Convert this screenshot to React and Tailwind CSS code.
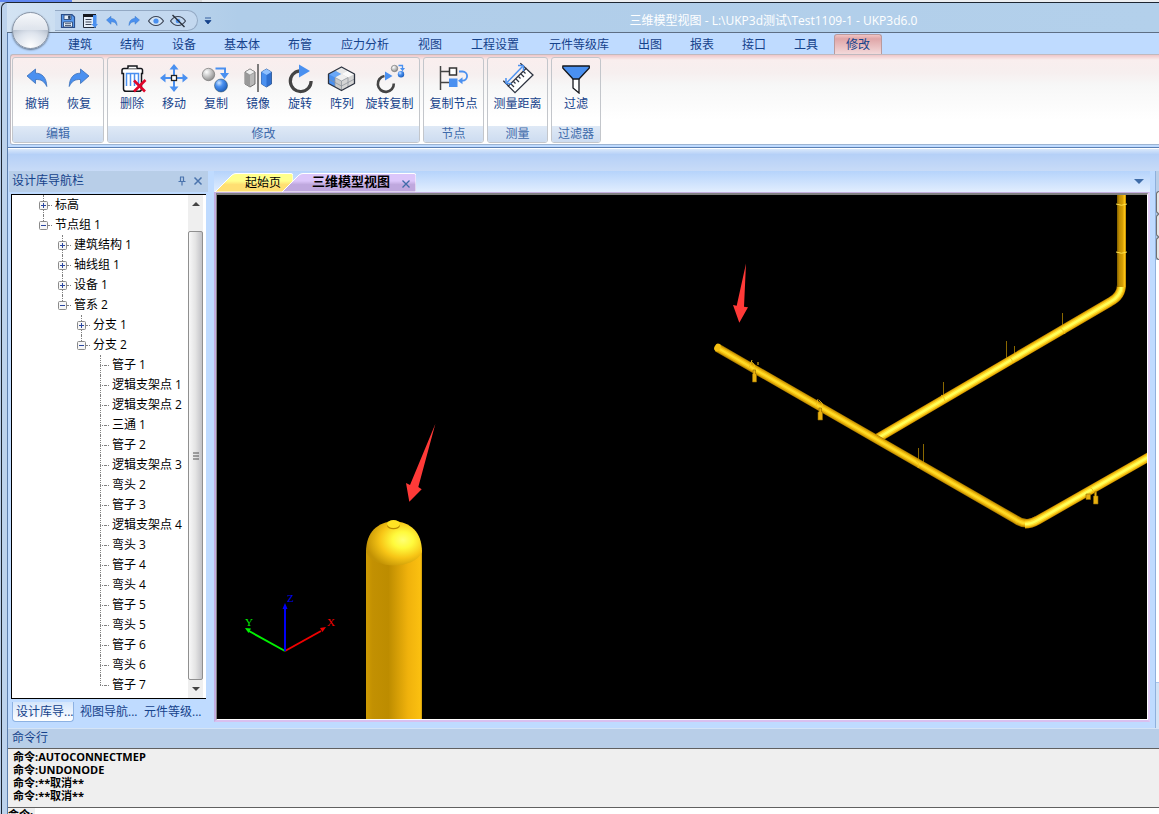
import { useState } from 'react'
import clsx from 'clsx'

const menuTabs = [
  '建筑', '结构', '设备', '基本体', '布管', '应力分析', '视图', '工程设置',
  '元件等级库', '出图', '报表', '接口', '工具', '修改',
]

const tabWidth = { 2: 'w-[52px]', 3: 'w-16', 4: 'w-[78px]', 5: 'w-[90px]' }

const tree = [
  { level: 0, label: '标高', box: '+' },
  { level: 0, label: '节点组 1', box: '-', last: true },
  { level: 1, label: '建筑结构 1', box: '+' },
  { level: 1, label: '轴线组 1', box: '+' },
  { level: 1, label: '设备 1', box: '+' },
  { level: 1, label: '管系 2', box: '-', last: true },
  { level: 2, label: '分支 1', box: '+' },
  { level: 2, label: '分支 2', box: '-', last: true },
  { level: 3, label: '管子 1' },
  { level: 3, label: '逻辑支架点 1' },
  { level: 3, label: '逻辑支架点 2' },
  { level: 3, label: '三通 1' },
  { level: 3, label: '管子 2' },
  { level: 3, label: '逻辑支架点 3' },
  { level: 3, label: '弯头 2' },
  { level: 3, label: '管子 3' },
  { level: 3, label: '逻辑支架点 4' },
  { level: 3, label: '弯头 3' },
  { level: 3, label: '管子 4' },
  { level: 3, label: '弯头 4' },
  { level: 3, label: '管子 5' },
  { level: 3, label: '弯头 5' },
  { level: 3, label: '管子 6' },
  { level: 3, label: '弯头 6' },
  { level: 3, label: '管子 7', last: true },
]

const treeIndent = ['pl-[27px]', 'pl-[46px]', 'pl-[65px]', 'pl-[84px]']

const history = ['命令:AUTOCONNECTMEP', '命令:UNDONODE', '命令:**取消**', '命令:**取消**']

const BLUE = '#4a90f0'
const INK = '#2d3340'

/* ---------- ribbon icons, 32 x 32 ---------- */

const UndoPath = () => (
  <path d="M6 14 14.5 7v4.2C21 11 25.500 15.500 25.800 24.500 23 19 20 17.300 14.500 17.500V21.500Z" fill={BLUE} stroke="#3a6fb8" strokeWidth=".8" strokeLinejoin="round" />
)

const icons = {
  undo: <UndoPath />,
  redo: <g transform="matrix(-1 0 0 1 32 0)"><UndoPath /></g>,
  remove: (
    <>
      <path d="M8.500 6.500h16.500a1.500 1.500 0 0 1 1.500 1.500v3.500h-1V27a2.300 2.300 0 0 1-2.300 2.300H9.800A2.300 2.300 0 0 1 7.500 27V11.500H6V8.500a2 2 0 0 1 2-2Z" fill="#fff" stroke="#15171c" strokeWidth="1.500" />
      <path d="M12 6.500V4h9v2.500" fill="#fff" stroke="#15171c" strokeWidth="1.500" />
      <path d="M10.500 24V11.500h12V24M14.500 12v12M18.500 12v12" fill="none" stroke={BLUE} strokeWidth="1.500" />
      <path d="m18 18.500 11 11M29.500 18 18 29.500" stroke="#e0052a" strokeWidth="2.600" />
    </>
  ),
  move: (
    <>
      <path d="M16 5v22M5 16h22" stroke={BLUE} strokeWidth="2" />
      <path d="m16 2 4.500 5.500h-9ZM16 30l4.500-5.500h-9ZM2 16l5.500-4.500v9ZM30 16l-5.500-4.500v9Z" fill={BLUE} />
      <rect x="13.500" y="13.500" width="5" height="5" fill="#fff" stroke="#222" strokeWidth="1.300" />
    </>
  ),
  copy: (
    <>
      <circle cx="8.500" cy="12.500" r="6.200" fill="url(#ballWhite)" stroke="#777" strokeWidth=".7" />
      <path d="M15.500 6.500h9.500v5" fill="none" stroke={BLUE} strokeWidth="2" />
      <path d="M20 11h9l-4.500 6Z" fill={BLUE} />
      <circle cx="21" cy="23.500" r="6.500" fill="url(#ballBlue)" stroke="#245" strokeWidth=".5" />
    </>
  ),
  mirror: (
    <>
      <path d="M3 10 8 7l5 3v12l-5 3-5-3Z" fill="#b9b9b9" stroke="#555" strokeWidth=".8" />
      <path d="m3 10 5 3v12l-5-3Z" fill="#999" />
      <path d="m3 10 5-3 5 3-5 3Z" fill="#eee" stroke="#777" strokeWidth=".5" />
      <path d="M16 2v28" stroke="#555" strokeWidth="1.500" />
      <path d="m19.500 10 5-3 5 3v12l-5 3-5-3Z" fill="#2f6fcf" stroke="#24508f" strokeWidth=".8" />
      <path d="m19.500 10 5 3v12l-5-3Z" fill="#4a90f0" />
      <path d="m19.500 10 5-3 5 3-5 3Z" fill="#8fc0ff" />
    </>
  ),
  rotate: (
    <>
      <path d="M15.500 8.800a10.400 10.400 0 1 0 11.600 10.200" fill="none" stroke="#444" strokeWidth="3.200" />
      <path d="M15 2.500v13L26 9Z" fill={BLUE} />
    </>
  ),
  array: (
    <>
      <path d="m15.500 5 13 7v9.500l-13 7-13-7V12Z" fill="#c9c9c9" />
      <path d="M15.500 19v9.500l13-7V12Z" fill="#d4d4d4" />
      <path d="m9 8.500 6.500 3.500L9 15.500v9.500l-6.500-3.500V12Z" fill={BLUE} />
      <path d="m9 8.500 6.500 3.500L9 15.500 2.500 12Z" fill="#6aa8f8" />
      <path d="m15.500 5 6.500 3.500-6.500 3.500L9 8.500Z" fill="#e8e8e8" />
      <path d="m22 8.500 6.500 3.500-6.500 3.500-6.500-3.500Z" fill="#fafafa" />
      <path d="m15.500 12 6.500 3.500-6.500 3.500L9 15.500Z" fill="#efefef" />
      <path d="m9 15.500 6.500 3.500L22 15.500M15.500 19v9.500M9 15.500V25M22 15.500V25M2.500 17 9 20.500l6.500 3.500 13-7" fill="none" stroke="#8a9098" strokeWidth=".7" />
      <path d="m15.500 5 13 7v9.500l-13 7-13-7V12Z" fill="none" stroke={INK} strokeWidth="1.300" strokeLinejoin="round" />
    </>
  ),
  rotateCopy: (
    <>
      <path d="M10.500 14a8 8 0 1 0 9.300 7.500" fill="none" stroke="#444" strokeWidth="2.600" />
      <path d="M11 9.500v9l7.500-4.500Z" fill={BLUE} />
      <circle cx="20.500" cy="6.500" r="3.200" fill="url(#ballWhite)" stroke="#777" strokeWidth=".7" />
      <path d="M24.500 3.500h4v3" fill="none" stroke={BLUE} strokeWidth="1.300" />
      <path d="M26 6h5l-2.500 3.200Z" fill={BLUE} />
      <circle cx="27" cy="12.300" r="3.200" fill="url(#ballBlue)" />
    </>
  ),
  copyNode: (
    <>
      <path d="M2.500 4v24M2.500 9.500H11M2.500 20.500H11" stroke="#444" strokeWidth="1.500" />
      <rect x="11.500" y="6" width="7" height="7" fill="#fff" stroke="#333" strokeWidth="1.500" />
      <rect x="11" y="16.500" width="8.500" height="8.500" fill={BLUE} />
      <path d="M21 9.500h3.500a4.600 4.600 0 0 1 0 9.200H23" fill="none" stroke={BLUE} strokeWidth="1.800" />
      <path d="m20 18.700 4.500-3.500v7Z" fill={BLUE} />
    </>
  ),
  measure: (
    <>
      <path d="m24 6.500 7 6.500L13 30.700 6.300 24Z" fill="#fff" stroke={INK} strokeWidth="1.300" />
      <path d="m18.300 1.300 6 5.500M1.300 18.700l5.500 5.500" stroke={INK} strokeWidth="1.300" />
      <path d="m9 22 3 3M11.500 19.500l2 2M14 17l3 3M16.500 14.500l2 2M19 12l3 3M21.500 9.500l2 2" stroke={INK} strokeWidth="1.200" />
      <path d="M5 20.500 20.500 4.500" stroke={BLUE} strokeWidth="1.500" />
      <path d="M21.500 3.500v5.500M21.500 3.500H16M4 21.500v-5.500M4 21.500h5.500" stroke={BLUE} strokeWidth="1.500" />
    </>
  ),
  filter: (
    <>
      <path d="M13 17v9l6 5V17" fill="#fff" stroke="#15171c" strokeWidth="1.300" />
      <path d="M2.800 4h26.500v2L19 17h-6L2.800 6Z" fill={BLUE} stroke="#15171c" strokeWidth="1.300" strokeLinejoin="round" />
    </>
  ),
}

const groups = [
  { name: '编辑', items: [['undo', '撤销'], ['redo', '恢复']] },
  {
    name: '修改',
    items: [
      ['remove', '删除'], ['move', '移动'], ['copy', '复制'], ['mirror', '镜像'],
      ['rotate', '旋转'], ['array', '阵列'], ['rotateCopy', '旋转复制'],
    ],
  },
  { name: '节点', items: [['copyNode', '复制节点']] },
  { name: '测量', items: [['measure', '测量距离']] },
  { name: '过滤器', items: [['filter', '过滤']] },
]

/* ---------- quick access icons, 16 x 16 ---------- */

const quick = [
  {
    name: '保存',
    art: (
      <>
        <path d="M1.500 1.500h10.500l2.500 2.500v10.500h-13Z" fill="#5a9cf0" stroke="#2c4f8c" strokeWidth="1.200" />
        <path d="M4 2h7v4.500H4ZM3.500 9h9v5h-9Z" fill="#e4eefa" stroke="#2c4a78" strokeWidth=".9" />
        <path d="M8.500 3h1.500v2.500H8.500ZM5 10.700h6M5 12.500h6" fill="#2c3f5c" stroke="#2c3f5c" strokeWidth=".8" />
      </>
    ),
  },
  {
    name: '另存为',
    art: (
      <>
        <path d="M1.500 1.500h12v13h-12Z" fill="#e4eefa" stroke="#222b3a" />
        <path d="M1 1h13v3H1Z" fill="#15181f" />
        <path d="M3.500 6.500h6M3.500 9h6M3.500 11.500h6" stroke="#3a4354" />
        <path d="M11 2h3.500v9H16l-3.200 4L9.500 11H11Z" fill={BLUE} />
      </>
    ),
  },
  { name: '撤销', art: <path d="M2.500 7 7 3.300v2.200c3.500 0 6 2.500 6 7-1.500-3-3-3.800-6-3.700v2.400Z" fill={BLUE} stroke="#3a78c8" strokeWidth=".5" /> },
  { name: '恢复', art: <path d="M13.500 7 9 3.300v2.200c-3.500 0-6 2.500-6 7 1.500-3 3-3.800 6-3.700v2.400Z" fill={BLUE} stroke="#3a78c8" strokeWidth=".5" /> },
  {
    name: '显示',
    art: (
      <>
        <path d="M.5 8c4-6 11-6 15 0-4 6-11 6-15 0Z" fill="#d3e4f6" stroke="#3a4354" strokeWidth="1.200" />
        <circle cx="8" cy="8" r="2.600" fill={BLUE} />
      </>
    ),
  },
  {
    name: '隐藏',
    art: (
      <>
        <path d="M.5 8c4-6 11-6 15 0-4 6-11 6-15 0Z" fill="none" stroke="#3a4354" strokeWidth="1.200" />
        <circle cx="8" cy="8" r="2.300" fill={BLUE} />
        <path d="m2.500 2 12 12" stroke="#2a303c" strokeWidth="1.400" />
      </>
    ),
  },
]

function SharedGradients() {
  return (
    <svg className="absolute size-0" aria-hidden="true">
      <defs>
        <radialGradient id="ballWhite" cx=".35" cy=".3" r=".75">
          <stop offset="0" stopColor="#fff" />
          <stop offset="1" stopColor="#8a8a8a" />
        </radialGradient>
        <radialGradient id="ballBlue" cx=".35" cy=".3" r=".75">
          <stop offset="0" stopColor="#cfe6ff" />
          <stop offset=".4" stopColor="#4a90f0" />
          <stop offset="1" stopColor="#1b5cb8" />
        </radialGradient>
      </defs>
    </svg>
  )
}

function TitleBar() {
  return (
    <header className="flex h-[30px] shrink-0 items-start border-b border-[#5d6e84] bg-linear-to-r from-[#d3e3f3] via-[#b0cde9] via-20% to-[#b3d0eb] pl-12">
      <div className="mt-[7px] flex h-[21px] items-center gap-1.5 rounded-r-full border border-l-0 border-[#93a9c4] bg-[#c3d8ef] pr-[11px] pl-[5px]">
        {quick.map(q => (
          <button key={q.name} aria-label={q.name} className="size-4">
            <svg viewBox="0 0 16 16" className="size-4">{q.art}</svg>
          </button>
        ))}
      </div>
      <button aria-label="自定义" className="mt-3.5 ml-1.5 w-2">
        <svg viewBox="0 0 8 8" className="size-2"><path d="M1 1h6M1 3.500h6L4 7Z" fill="#15428b" stroke="#15428b" strokeWidth=".8" /></svg>
      </button>
      <h1 className="mt-2 flex-1 pl-44 text-center text-xs leading-5 whitespace-pre text-white">三维模型视图 - L:\UKP3d测试\Test1109-1 - UKP3d6.0</h1>
    </header>
  )
}

function Ribbon({ active, onSelect }) {
  return (
    <div className="border-b border-[#5b80b4] bg-[#bfdbff] pb-0.5">
      <nav className="flex h-[21px] items-end pl-[46px]">
        {menuTabs.map(t => (
          <button key={t} onClick={() => onSelect(t)} className={clsx('flex h-[21px] shrink-0 items-center justify-center px-0.5 text-[#15428b]', tabWidth[t.length])}>
            <span className={clsx('flex h-5 flex-1 items-center justify-center self-end border border-b-0 pt-px', t === active ? 'rounded-t-[3px] border-[#b99a9d] bg-linear-to-b from-[#f2c4c4] via-[#dfa6a8] via-20% to-[#f3d9da]' : 'border-transparent')}>
              {t}
            </span>
          </button>
        ))}
      </nav>
      <div className="ml-0.5 flex gap-[3px] rounded-l-[3px] border-y border-l border-[#bfb9bf] border-b-[#9db4d2] bg-[linear-gradient(#efc6c8_0px,#f9eeee_5px,#f6efef_18px,#f7f7f7_30px,#ffffff_65px)] pt-0.5 pb-px pl-px">
        {groups.map(g => (
          <section key={g.name} className="flex h-[86px] flex-col overflow-hidden rounded-[3px] border border-[#c3c6cb] bg-[linear-gradient(#faeeee_0px,#f6efef_16px,#f7f7f7_28px,#ffffff_60px)]">
            <div className="flex flex-1 items-start px-[3px] pt-1">
              {g.items.map(([icon, label]) => (
                <button key={icon} className={clsx('flex flex-col items-center text-[#15428b]', label.length > 2 ? 'w-[53px]' : 'w-[42px]')}>
                  <svg viewBox="0 0 32 32" className="size-8">{icons[icon]}</svg>
                  <span className="leading-5 whitespace-nowrap">{label}</span>
                </button>
              ))}
            </div>
            <h2 className="h-4 bg-linear-to-b from-[#dfe9f6] to-[#cddcf0] text-center leading-4 text-[#3e6aaa]">{g.name}</h2>
          </section>
        ))}
      </div>
    </div>
  )
}

function TreeRow({ node }) {
  return (
    <li className={clsx('flex h-5 items-center', treeIndent[node.level])}>
      <span className="relative flex h-5 w-[9px] items-center">
        <span className={clsx('absolute top-0 left-1 border-l border-dotted border-[#808080]', node.last ? 'h-2.5' : 'h-5')} />
        {node.box && (
          <button aria-label={node.box === '+' ? '展开' : '折叠'} className="relative size-[9px]">
            <svg viewBox="0 0 9 9" className="size-[9px]">
              <rect x=".5" y=".5" width="8" height="8" rx="1" fill="#f6f6f6" stroke="#8a8a8a" />
              <path d={node.box === '+' ? 'M2 4.500h5M4.500 2v5' : 'M2 4.500h5'} stroke="#2a47a0" />
            </svg>
          </button>
        )}
        {!node.box && <span className="ml-1 w-[5px] border-t border-dotted border-[#808080]" />}
      </span>
      <span className="mr-[3px] w-1 border-t border-dotted border-[#808080]" />
      <span className="whitespace-nowrap">{node.label}</span>
    </li>
  )
}

function Navigator() {
  return (
    <aside className="flex w-[199px] shrink-0 flex-col">
      <div className="flex h-[21px] shrink-0 items-center bg-[#b8cee8] pr-[5px] pb-px pl-[3px] text-[#15428b]">
        <h2 className="flex-1">设计库导航栏</h2>
        <button aria-label="固定" className="mr-1.5">
          <svg viewBox="0 0 10 10" className="size-2.5"><path d="M3 1h4M3.500 1v4.500M6.500 1v4.500M1.500 5.500h7M5 5.500V9.500" fill="none" stroke="#4b74ad" strokeWidth="1.200" /></svg>
        </button>
        <button aria-label="关闭">
          <svg viewBox="0 0 10 10" className="size-2.5"><path d="m1.500 1.500 7 7M8.500 1.500l-7 7" stroke="#4b74ad" strokeWidth="1.500" /></svg>
        </button>
      </div>
      <div className="mx-0.5 mt-0.5 flex min-h-0 flex-1 border border-r-0 border-black bg-white pr-[3px]">
        <ul className="min-w-0 flex-1 overflow-hidden text-black">
          {tree.map((n, i) => <TreeRow key={i} node={n} />)}
        </ul>
        <div className="flex w-[15px] shrink-0 flex-col bg-[#efefef]">
          <button aria-label="向上" className="flex h-[17px] items-center justify-center">
            <svg viewBox="0 0 8 4" className="h-1 w-2"><path d="M0 4 4 0l4 4Z" fill="#444" /></svg>
          </button>
          <div className="h-[19px]" />
          <div className="flex flex-1 items-center justify-center rounded-[2px] border border-[#8f8f8f] bg-linear-to-r from-[#f8f8f8] via-[#e4e4e4] to-[#c2c2c6]">
            <svg viewBox="0 0 8 8" className="size-2"><path d="M1 1h6M1 4h6M1 7h6" stroke="#555" /></svg>
          </div>
          <button aria-label="向下" className="flex h-[18px] items-center justify-center">
            <svg viewBox="0 0 8 4" className="h-1 w-2"><path d="M0 0h8L4 4Z" fill="#444" /></svg>
          </button>
        </div>
      </div>
      <div className="mt-[3px] mb-1.5 flex h-5 shrink-0 items-center px-[3px] text-[#15428b]">
        <button className="h-5 w-[62px] rounded-b-[4px] border border-t-0 border-[#8db2e3] bg-linear-to-b from-[#d5e6fb] to-white pl-[3px] text-left whitespace-nowrap">设计库导...</button>
        <button className="h-5 w-16 pl-1.5 text-left whitespace-nowrap">视图导航...</button>
        <button className="h-5 w-16 pl-1.5 text-left whitespace-nowrap">元件等级...</button>
      </div>
    </aside>
  )
}

/* A pipe run is the same path stroked from its dark edge to its highlight. */
function Pipe({ d, bright }) {
  const tones = bright
    ? [['#c98f00', 9], ['#f0b90c', 7.5], ['#ffe030', 5], ['#ffff5a', 2.5]]
    : [['#a87c00', 8.5], ['#d9a205', 7], ['#f6c514', 4.5], ['#ffdc28', 2]]
  return tones.map(([color, width], i) => (
    <path key={i} d={d} fill="none" stroke={color} strokeWidth={width} strokeLinejoin="round" />
  ))
}

function Scene() {
  return (
    <svg viewBox="0 0 930 524" preserveAspectRatio="xMidYMid slice" className="absolute inset-0 size-full" role="img" aria-label="三维模型">
      <defs>
        <linearGradient id="tank" x1="0" x2="1">
          <stop offset="0" stopColor="#cf9b02" />
          <stop offset=".12" stopColor="#c29002" />
          <stop offset=".4" stopColor="#bd8c00" />
          <stop offset=".75" stopColor="#f0b20c" />
          <stop offset=".97" stopColor="#fbc010" />
          <stop offset="1" stopColor="#c99708" />
        </linearGradient>
        <radialGradient id="dome" cx=".66" cy=".42" r=".66">
          <stop offset="0" stopColor="#ffff74" />
          <stop offset=".28" stopColor="#fffa3c" />
          <stop offset=".62" stopColor="#f7c516" />
          <stop offset="1" stopColor="#c29204" />
        </radialGradient>
        <linearGradient id="riser" x1="0" x2="1">
          <stop offset="0" stopColor="#7d5d00" />
          <stop offset=".25" stopColor="#c08d00" />
          <stop offset=".6" stopColor="#d59e04" />
          <stop offset=".85" stopColor="#ffc414" />
          <stop offset="1" stopColor="#b08000" />
        </linearGradient>
      </defs>

      {/* vessel */}
      <path d="M149 355h56v170h-56Z" fill="url(#tank)" />
      <path d="M149 357c0-20 12-30.500 28-30.500s28 10.500 28 30.500c-4 9-16 13.500-28 13.500s-24-4.500-28-13.500Z" fill="url(#dome)" />
      <ellipse cx="176.500" cy="330.500" rx="6.500" ry="3.800" fill="#b98a00" />
      <ellipse cx="176.500" cy="329" rx="6.500" ry="4" fill="#ffe324" />

      {/* hanger rods */}
      <path d="M845.500 118v18M789.500 146v18M797.500 151v15M726.500 187v17M701.500 253v16M706.500 249v18" stroke="#8a6800" />

      {/* pipes */}
      <Pipe bright d="M660 243.500 893 107Q904.500 101 904.500 90" />
      <path d="M900 0h9v92h-9Z" fill="url(#riser)" />
      <path d="M899 9q5.500 2.500 11 0M899 57q5.500 2.500 11 0" fill="none" stroke="#ffe24a" />
      <Pipe d="M500 152.500 798 324Q809 332 820 325" />
      <ellipse cx="500.500" cy="152.500" rx="3" ry="4" fill="#f5c012" transform="rotate(30 500.500 152.500)" />
      <Pipe bright d="M808 329Q814 329 821 325L935 260" />

      {/* supports */}
      <g fill="none" stroke="#f3c21a">
        <path d="m535 165-3 8M541 170v-3M534.500 167q3 1 4 9" />
        <path d="m601 204-2 7M602 205q4 2 4 8M699 266q4 2 2 7M724 200q3 1 4 6M792 162q3 1 4 6M843 133q3 1 5 6M872 292q4 1 5 6" strokeOpacity=".8" />
      </g>
      <g fill="#e8b010" stroke="#8f6900" strokeWidth=".6">
        <path d="M536 175h2.500v4h1v8h-4v-8h.5ZM602 213h2.500v4h1v8h-4.500v-8h1ZM877.500 297h2v4h1.500v8h-4.500v-8h1ZM869 299h4.500v5.500H869Z" />
      </g>

      {/* annotation arrows */}
      <path d="M529 68.500 519.700 110.700 516 110 522.300 127.700 531 112.300 527 111.700Z" fill="#ff3a38" />
      <path d="M218.300 229 193 290 189 288 192.300 306.700 204.700 294.300 201.300 292Z" fill="#ff3a38" />

      {/* axis triad */}
      <g strokeWidth="2">
        <path d="M68 456 32 436" stroke="#00f000" />
        <path d="m68 456 36-20" stroke="#f00000" />
        <path d="M68 456v-42" stroke="#0000f5" />
      </g>
      <path d="m28 433 6 .500-2.500 4.500Z" fill="#00f000" />
      <path d="m109 432-6 1 2.500 4Z" fill="#f00000" />
      <path d="m68 408 2.500 6h-5Z" fill="#0000f5" />
      <g className="font-['Liberation_Serif',serif] text-[11px]">
        <text x="28" y="431" fill="#00f000">Y</text>
        <text x="70" y="407" fill="#0000f5">Z</text>
        <text x="110" y="431" fill="#f00000">X</text>
      </g>
    </svg>
  )
}

function Workspace() {
  return (
    <main className="flex min-w-0 flex-1 flex-col">
      <div className="flex h-[21px] shrink-0 items-end bg-linear-to-b from-[#b5d3fb] to-[#e2eefe]">
        <button className="relative h-[19px] w-[79px] shrink-0 pl-[31px] text-left">
          <svg viewBox="0 0 79 19" className="absolute inset-0 h-[19px] w-[79px]">
            <defs>
              <linearGradient id="yellowTab" x2="0" y2="1">
                <stop offset=".4" stopColor="#ffff8c" />
                <stop offset=".6" stopColor="#ffdf72" />
              </linearGradient>
            </defs>
            <path d="M1 19 18 2q2-1.500 4-1.500h55q2 0 2 2V19Z" fill="url(#yellowTab)" stroke="#fff" />
          </svg>
          <span className="relative leading-[18px]">起始页</span>
        </button>
        <div className="relative -ml-3 flex h-[19px] w-[135px] shrink-0 items-center pr-[5px] pl-[31px]">
          <svg viewBox="0 0 135 19" className="absolute inset-0 h-[19px] w-[135px]">
            <defs>
              <linearGradient id="purpleTab" x2="0" y2="1">
                <stop offset=".4" stopColor="#dcc6fa" />
                <stop offset=".6" stopColor="#bfa8de" />
              </linearGradient>
            </defs>
            <path d="M1 19 18 2q2-1.500 4-1.500h111q2 0 2 2V19Z" fill="url(#purpleTab)" stroke="#fff" />
          </svg>
          <span className="relative flex-1 self-start text-[13px] leading-4 font-bold whitespace-nowrap text-black">三维模型视图</span>
          <button aria-label="关闭" className="relative">
            <svg viewBox="0 0 10 10" className="mt-0.5 size-2.5"><path d="m1.500 1.500 7 7M8.500 1.500l-7 7" stroke="#3f6ca8" strokeWidth="1.300" /></svg>
          </button>
        </div>
        <div className="flex flex-1 items-center justify-end self-stretch pr-1.5">
          <button aria-label="窗口列表">
            <svg viewBox="0 0 10 5" className="h-[5px] w-2.5"><path d="M0 0h10L5 5Z" fill="#3f6ca8" /></svg>
          </button>
        </div>
      </div>
      <div className="mb-1.5 flex min-h-0 flex-1 border-x-2 border-t border-b-2 border-[#c3aee0] border-r-[#e3cdf5] border-b-[#d9c0ef]">
        <div className="relative flex-1 border border-t-2 border-[#808080] border-r-white border-b-white bg-black">
          <Scene />
        </div>
      </div>
    </main>
  )
}

function RightPanel() {
  return (
    <div className="flex w-1 shrink-0 flex-col border-l border-[#8fb0dc]">
      <div className="h-5 bg-[#b8cee8]" />
      {[0, 1, 2].map(i => (
        <button key={i} aria-label={`工具 ${i + 1}`} className="h-[23px] rounded-l-[3px] border-y border-l border-[#707070] bg-[#e6e6e6]" />
      ))}
      <div className="flex-1 bg-white" />
      <div className="h-[46px] border-t border-[#a9c6ee] bg-[#d3e3f6]" />
    </div>
  )
}

function CommandPane() {
  const [command, setCommand] = useState('')
  return (
    <footer className="shrink-0 border-t border-[#d5e4f6]">
      <h2 className="h-[19px] bg-[#b8cee8] pl-1 leading-[17px] text-[#15428b]">命令行</h2>
      <div className="h-[60px] border-y border-[#606060] bg-[#efefef] pt-px pl-[5px] text-[11px] leading-[13px] font-bold text-black">
        {history.map((line, i) => <p key={i}>{line}</p>)}
      </div>
      <div className="flex h-1.5 items-start bg-white">
        <label htmlFor="command" className="h-1.5 bg-[#efefef] pr-0.5 text-[11px] leading-[13px] font-bold text-black">命令:</label>
        <input id="command" value={command} onChange={e => setCommand(e.target.value)} className="h-1.5 flex-1 bg-white outline-none" />
      </div>
    </footer>
  )
}

export default function App() {
  const [active, setActive] = useState('修改')

  return (
    <div className="flex h-screen flex-col overflow-hidden bg-[#b8cdea] font-['Open_Sans','Noto_Sans_CJK_SC',sans-serif] text-xs leading-4">
      <SharedGradients />
      <div className="flex h-0.5 shrink-0">
        <div className="w-[72px] bg-[#5f86f0]" />
        <div className="w-[130px] bg-[#dcdcdc]" />
        <div className="flex-1 bg-[#eceef1]" />
      </div>
      <div className="relative ml-px flex min-h-0 flex-1 flex-col rounded-tl-md border-t border-l border-[#1d2632] bg-[#bcd2ec]">
        <div className="flex min-h-0 flex-1 flex-col pl-[5px]">
          <TitleBar />
          <div className="flex min-h-0 flex-1 flex-col border-l border-[#5d7fae] bg-[#bfdbff]">
            <Ribbon active={active} onSelect={setActive} />
            <div className="h-[23px] shrink-0 border-t border-white bg-linear-to-b from-[#d9e8fb] via-[#b5d0f7] via-25% to-[#c8dbf7]" />
            <div className="flex min-h-0 flex-1 pl-px">
              <Navigator />
              <div className="w-1.5 shrink-0" />
              <Workspace />
              <div className="w-[5px] shrink-0" />
              <RightPanel />
            </div>
            <CommandPane />
          </div>
        </div>
        <button aria-label="应用程序菜单" className="absolute top-[9px] left-2.5 size-[37px] rounded-full border border-[#8995a6] bg-[radial-gradient(circle_at_50%_95%,#ffffff_0%,#dfe5ee_35%,transparent_60%),linear-gradient(#f6f8fb_0%,#dfe4ec_48%,#b7c1cf_50%,#dde3ec_100%)] shadow-[0_1px_2px_#5d6e84]" />
      </div>
    </div>
  )
}
